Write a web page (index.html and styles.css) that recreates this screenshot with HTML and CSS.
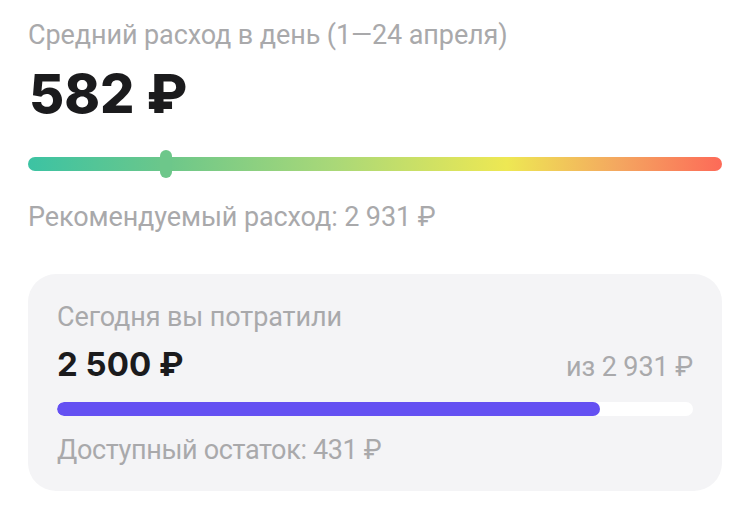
FILE: index.html
```html
<!DOCTYPE html>
<html lang="ru">
<head>
<meta charset="utf-8">
<link rel="stylesheet" href="styles.css">
</head>
<body>
<main class="page">
  <section class="avg">
    <p class="label">Средний расход в день (1—24 апреля)</p>
    <p class="big">582 ₽</p>
    <div class="scale">
      <div class="scale-bar"></div>
      <span class="marker" style="left: 19.9%"></span>
    </div>
    <p class="label rec">Рекомендуемый расход: 2 931 ₽</p>
  </section>
  <section class="card">
    <p class="label">Сегодня вы потратили</p>
    <div class="row">
      <span class="amount">2 500 ₽</span>
      <span class="label">из 2 931 ₽</span>
    </div>
    <div class="track"><div class="fill" style="width: 85.4%"></div></div>
    <p class="label rest">Доступный остаток: 431 ₽</p>
  </section>
</main>
</body>
</html>
```
FILE: styles.css
```css
* { box-sizing: border-box; }
html, body { margin: 0; padding: 0; background: #fff; }
body { font-family: Roboto, "Noto Sans", sans-serif; }
.page { padding: 18px 28px 0 28px; display: flex; flex-direction: column; }
p { margin: 0; }
.label { color: #a9a9ab; font-size: 27px; line-height: 34px; letter-spacing: -0.1px; }
.big { font-family: Inter, Roboto, sans-serif; font-size: 54px; font-weight: 800; color: #1b1b1d; line-height: 64px; margin-top: 10px; padding-left: 1px; }
.scale { position: relative; margin-top: 31px; height: 14px; }
.scale-bar { height: 14px; border-radius: 7px;
  background: linear-gradient(90deg, #3cc3a3 0%, #6cc78a 20%, #a9d878 44%, #eee853 69%, #f4a760 85%, #fd6a58 100%); }
.marker { position: absolute; top: -7px; width: 12px; height: 28px; margin-left: -6px; border-radius: 6px; background: #6dc78a; }
.rec { margin-top: 29px; }
.card { margin-top: 40px; background: #f4f4f6; border-radius: 28px; padding: 26px 29px 24px 29px; display: flex; flex-direction: column; }
.row { display: flex; justify-content: space-between; align-items: baseline; margin-top: 10px; }
.amount { font-family: Inter, Roboto, sans-serif; font-size: 33px; font-weight: 700; color: #1b1b1d; line-height: 40px; }
.track { margin-top: 18px; height: 14px; background: #fff; border-radius: 7px; overflow: hidden; }
.fill { height: 100%; background: #6450f2; border-radius: 7px; }
.rest { margin-top: 17px; letter-spacing: -0.35px; }
```
